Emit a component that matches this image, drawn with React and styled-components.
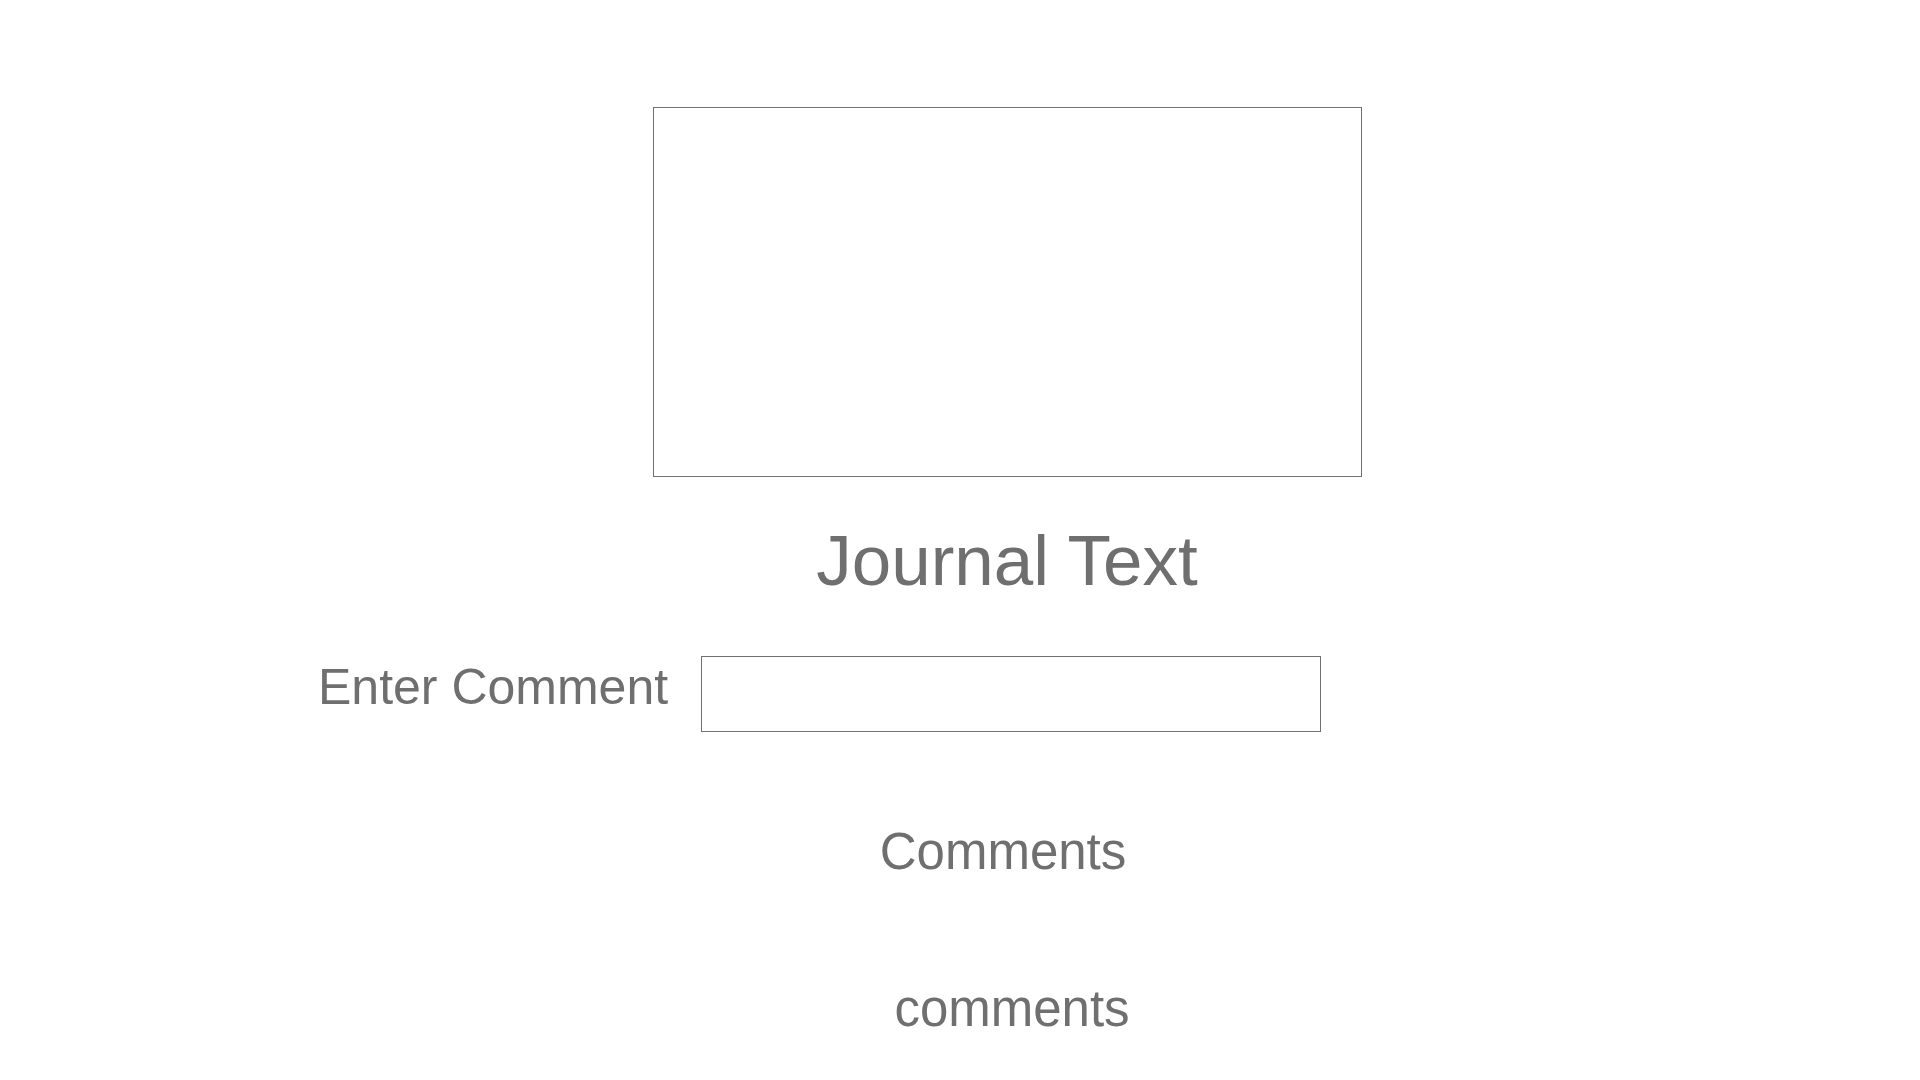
import styled, { createGlobalStyle } from "styled-components";

const GlobalStyle = createGlobalStyle`
    body {
        margin: 0;
        background: #ffffff;
        font-family: "Liberation Sans", Arial, sans-serif;
        color: #6f6f6f;
    }
`;

const Page = styled.div`
    display: flex;
    flex-direction: column;
    align-items: center;
    padding: 107px 0 0 94px;
    min-height: 100vh;
    box-sizing: border-box;
`;

const Picture = styled.div`
    width: 709px;
    height: 370px;
    box-sizing: border-box;
    border: 1px solid #707070;
`;

const Title = styled.h1`
    margin: 45px 0 0;
    font-size: 71px;
    font-weight: 400;
    line-height: 78px;
`;

const Row = styled.div`
    align-self: flex-start;
    display: flex;
    align-items: flex-start;
    gap: 33px;
    margin: 56px 0 0 224px;
`;

const Label = styled.label`
    font-size: 50px;
    line-height: 56px;
    margin-top: 3px;
`;

const Field = styled.input`
    width: 620px;
    height: 76px;
    box-sizing: border-box;
    border: 1px solid #707070;
    font: inherit;
    font-size: 30px;
    padding: 0 12px;
    outline: none;
`;

const Text = styled.p`
    margin: ${p => p.$top}px 0 0 ${p => p.$nudge * 2}px;
    font-size: 51px;
    line-height: 56px;
`;

export default function App() {
    return (
        <>
            <GlobalStyle />
            <Page>
                <Picture />
                <Title>Journal Text</Title>
                <Row>
                    <Label htmlFor="comment">Enter Comment</Label>
                    <Field id="comment" />
                </Row>
                <Text $top={92} $nudge={-4}>Comments</Text>
                <Text $top={101} $nudge={5}>comments</Text>
            </Page>
        </>
    );
}
